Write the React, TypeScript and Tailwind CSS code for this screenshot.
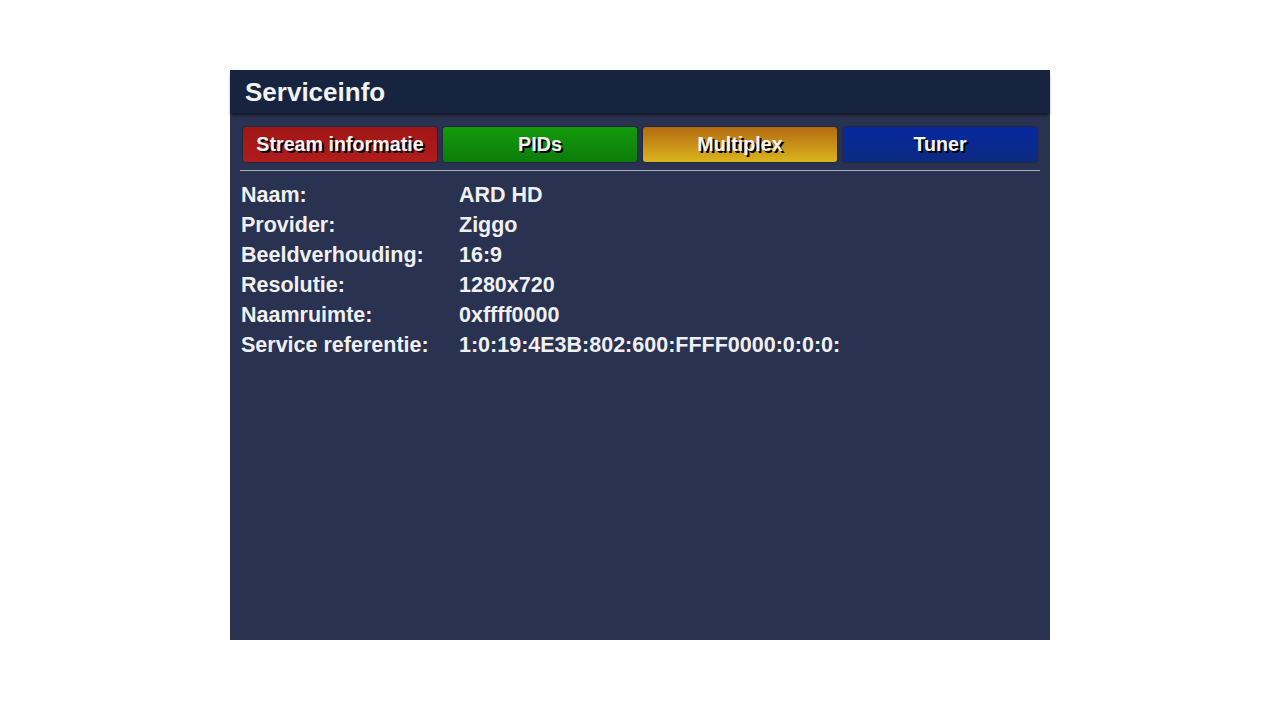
export default function App() {
  const rows: [string, string][] = [
    ['Naam:', 'ARD HD'],
    ['Provider:', 'Ziggo'],
    ['Beeldverhouding:', '16:9'],
    ['Resolutie:', '1280x720'],
    ['Naamruimte:', '0xffff0000'],
    ['Service referentie:', '1:0:19:4E3B:802:600:FFFF0000:0:0:0:'],
  ];

  const tabs = [
    { label: 'Stream informatie', cls: 'bg-gradient-to-b from-[#a11616] to-[#b01c1c]' },
    { label: 'PIDs', cls: 'bg-gradient-to-b from-[#149a0c] to-[#0c7d0a]' },
    { label: 'Multiplex', cls: 'bg-gradient-to-b from-[#b36a10] to-[#dab51e]' },
    { label: 'Tuner', cls: 'bg-gradient-to-b from-[#0628a0] to-[#0d2a80]' },
  ];

  return (
    <div className="w-[1280px] h-[720px] bg-white pt-[70px] font-['Liberation_Sans',Arial,sans-serif]">
      <div className="mx-auto w-[820px] h-[570px] bg-[#293250] flex flex-col">
        <div className="h-[43px] bg-[#16243f] flex items-center px-[15px] shadow-[0_3px_3px_-1px_rgba(0,0,0,0.6)]">
          <span className="text-[26px] font-bold text-[#f2f2f2] leading-none">Serviceinfo</span>
        </div>
        <div className="px-[10px] pt-[14px]">
          <div className="flex gap-[6px] px-[3px]">
            {tabs.map((t) => (
              <div
                key={t.label}
                className={`w-[194px] h-[35px] rounded-[3px] flex items-center justify-center shadow-[0_0_2px_rgba(0,0,0,0.7)] ${t.cls}`}
              >
                <span className="text-[19.7px] font-bold text-[#f4f4f4] leading-none [text-shadow:2px_2px_0_#000]">
                  {t.label}
                </span>
              </div>
            ))}
          </div>
          <div className="mt-[8px] h-[1px] bg-[#a9adb8]" />
          <div className="mt-[9px] flex flex-col">
            {rows.map(([k, v]) => (
              <div key={k} className="flex h-[30px] items-center text-[21.5px] font-bold text-[#f0f0f2]">
                <span className="w-[219px] pl-[1px]">{k}</span>
                <span>{v}</span>
              </div>
            ))}
          </div>
        </div>
      </div>
    </div>
  );
}
